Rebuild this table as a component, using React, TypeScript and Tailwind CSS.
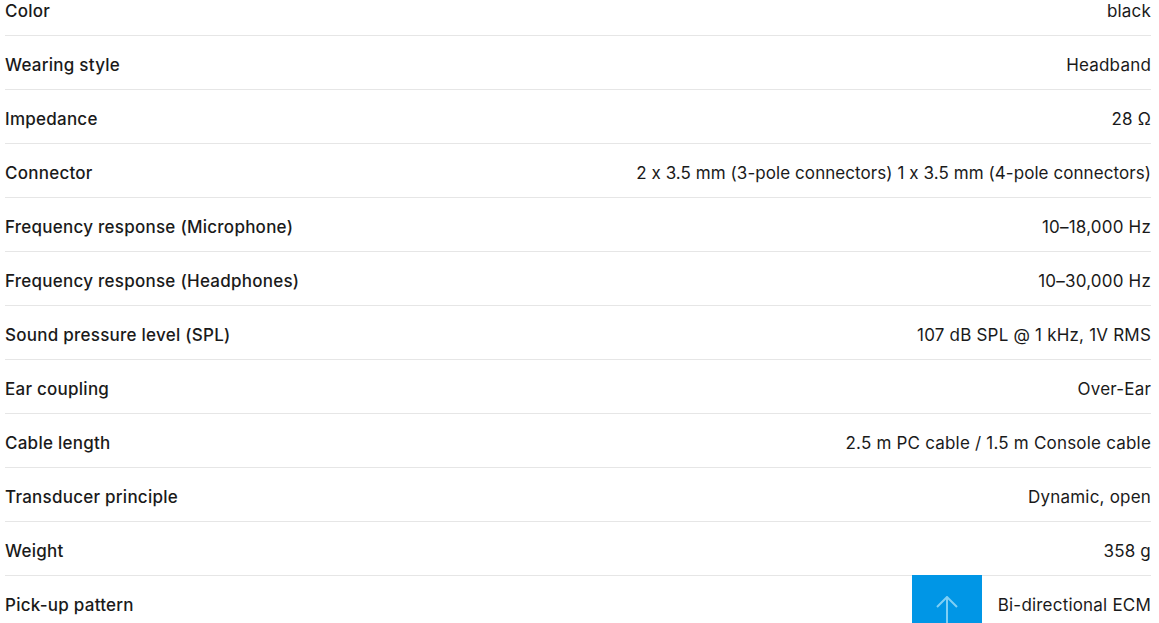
import React from "react";

const rows: [string, string, boolean?][] = [
  ["Color", "black"],
  ["Wearing style", "Headband"],
  ["Impedance", "28 Ω"],
  ["Connector", "2 x 3.5 mm (3-pole connectors) 1 x 3.5 mm (4-pole connectors)", true],
  ["Frequency response (Microphone)", "10–18,000 Hz"],
  ["Frequency response (Headphones)", "10–30,000 Hz"],
  ["Sound pressure level (SPL)", "107 dB SPL @ 1 kHz, 1V RMS"],
  ["Ear coupling", "Over-Ear"],
  ["Cable length", "2.5 m PC cable / 1.5 m Console cable"],
  ["Transducer principle", "Dynamic, open"],
  ["Weight", "358 g"],
  ["Pick-up pattern", "Bi-directional ECM"],
];

export default function App() {
  return (
    <div
      className="relative h-[623px] w-[1159px] overflow-hidden bg-white text-[#1a1a1a] [font-feature-settings:'calt'_0]"
      style={{ fontFamily: "Inter, 'Noto Sans', sans-serif" }}
    >
      <div className="-mt-[18px] pl-[5px] pr-[8px]">
        {rows.map(([k, v, tight]) => (
          <div
            key={k}
            className="flex h-[54px] items-center justify-between border-b border-[#e6e6e6] pt-[7px] text-[17px]"
          >
            <span className="font-medium tracking-[0.25px]">{k}</span>
            <span className={tight ? "font-normal tracking-[0.07px]" : "font-normal tracking-[0.2px]"}>{v}</span>
          </div>
        ))}
      </div>
      <button className="absolute left-[912px] top-[575px] flex h-[70px] w-[70px] items-start justify-center bg-[#0096e6]">
        <svg width="24" height="40" viewBox="0 0 24 40" className="mt-[21px]">
          <path d="M12 1 L12 40 M2 11 L12 1 L22 11" fill="none" stroke="#7fcff5" strokeWidth="2" />
        </svg>
      </button>
    </div>
  );
}
